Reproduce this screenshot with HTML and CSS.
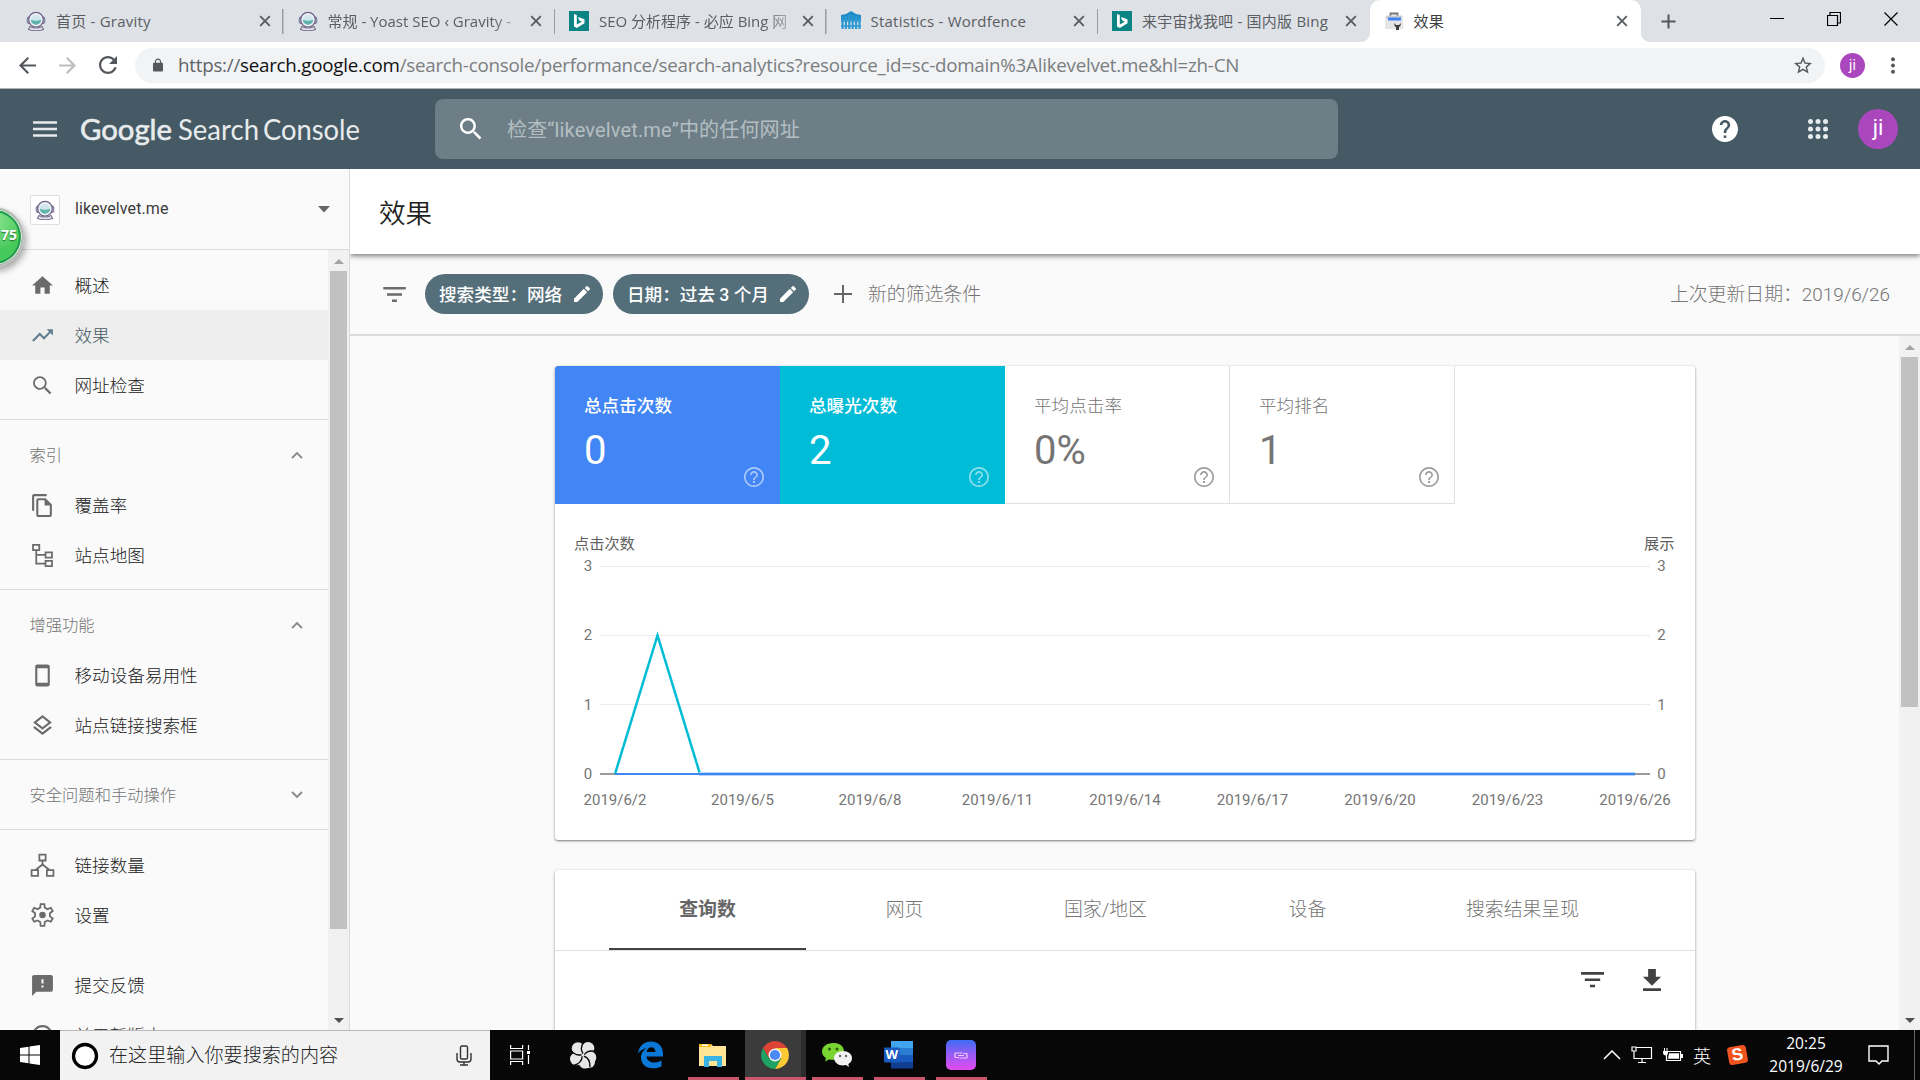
FILE: index.html
```html
<!DOCTYPE html>
<html lang="zh-CN">
<head>
<meta charset="utf-8">
<title>效果</title>
<link rel="stylesheet" href="styles.css">
</head>
<body>
<svg class="defs" width="0" height="0">
  <symbol id="astro" viewBox="0 0 20 20">
    <path d="M4 15.500q6 3 12 0l1.500 3q-7.500 2.400-15 0z" fill="#e4e0ec" stroke="#77708e" stroke-width="1.100"/>
    <rect x="1.200" y="6" width="3" height="6.500" rx="1.500" fill="#aaa4c0" stroke="#6b6486" stroke-width=".8"/>
    <rect x="15.800" y="6" width="3" height="6.500" rx="1.500" fill="#aaa4c0" stroke="#6b6486" stroke-width=".8"/>
    <circle cx="10" cy="8.700" r="7.300" fill="#f0eef6" stroke="#6b6486" stroke-width="1.200"/>
    <ellipse cx="10" cy="9" rx="5.300" ry="4.900" fill="#cfe9ea"/>
    <path d="M4.900 8.700q5 2 10.200 0a5.100 5 0 0 1-10.200 0z" fill="#5fb3ad"/>
  </symbol>
  <symbol id="bing" viewBox="0 0 20 20"><path d="M0 0h20v20H0z" fill="#0c8484"/><path d="M5 3l2.800 1v9.600l5-2.900-2.500-1.200-1.400-3.600 6.600 2.400v3.900L7.800 17 5 15.400z" fill="#fff"/></symbol>
  <symbol id="fence" viewBox="0 0 20 20"><path d="M0 9V4l5-1 5-3 5 3 5 1v5z" fill="#1c8cc8"/><path d="M1.500 6v12M4.900 5v13M8.300 4v14M11.700 4v14M15.100 5v13M18.500 6v12" stroke="#2d99d2" stroke-width="2.200"/><path d="M0 10h20M0 15h20" stroke="#2d99d2" stroke-width="1.300"/></symbol>
  <symbol id="gsc" viewBox="0 0 18 20"><path d="M5.500 5V2.500h7V5" fill="none" stroke="#777" stroke-width="1.800"/><path d="M1.500 4.500h15l1.500 3H0z" fill="#c8ccd0"/><path d="M0 7.500h18V18H0z" fill="#e3e5e7"/><path d="M3 6.500h13v3H3z" fill="#3f83f0"/><path d="M9 12q0 3 2 4v3h3v-3q2-1 2-4l-2 2h-3z" fill="#3c3c3c"/></symbol>
  <symbol id="x" viewBox="0 0 12 12"><path d="M1.200 1.200l9.600 9.600m0-9.600l-9.600 9.600" stroke="#5a5e63" stroke-width="1.900"/></symbol>
  <symbol id="helpo" viewBox="2 2 20 20"><path d="M11 18h2v-2h-2v2zm1-16C6.480 2 2 6.480 2 12s4.480 10 10 10 10-4.480 10-10S17.520 2 12 2zm0 18.300c-4.600 0-8.300-3.700-8.300-8.300S7.400 3.700 12 3.700s8.300 3.700 8.300 8.300-3.700 8.300-8.300 8.300zM12 6c-2.210 0-4 1.790-4 4h1.700c0-1.250 1-2.300 2.300-2.300s2.300 1.050 2.300 2.300c0 2-3.150 1.900-3.150 5h1.700c0-2.400 3.150-2.600 3.150-5 0-2.210-1.790-4-4-4z"/></symbol>
  <symbol id="pencil" viewBox="3 3 18 18"><path d="M3 17.250V21h3.750L17.810 9.940l-3.750-3.750L3 17.250zM20.710 7.040c.39-.39.39-1.020 0-1.410l-2.340-2.340c-.39-.39-1.020-.39-1.410 0l-1.830 1.830 3.750 3.750 1.830-1.830z"/></symbol>
  <symbol id="filter" viewBox="3 6 18 12"><path d="M10 18h4v-2h-4v2zM3 6v2h18V6H3zm3 7h12v-2H6v2z"/></symbol>
  <symbol id="up" viewBox="0 0 12 8"><path d="M1 7l5-5 5 5" fill="none" stroke="#8a8a8a" stroke-width="1.800"/></symbol>
  <symbol id="loupe" viewBox="3 3 18 18"><path d="M15.500 14h-.79l-.28-.27C15.410 12.590 16 11.110 16 9.500 16 5.910 13.090 3 9.500 3S3 5.910 3 9.500 5.910 16 9.500 16c1.610 0 3.090-.59 4.230-1.570l.27.28v.79l5 4.990L20.490 19l-4.990-5zm-6 0C7.010 14 5 11.990 5 9.500S7.010 5 9.500 5 14 7.010 14 9.500 11.990 14 9.500 14z"/></symbol>
</svg>

<div class="tabstrip">
  <div class="tab"><svg class="fav"><use href="#astro"/></svg><span class="tab-title">首页 - Gravity</span><svg class="tab-x"><use href="#x"/></svg></div>
  <div class="tab"><svg class="fav"><use href="#astro"/></svg><span class="tab-title fade">常规 - Yoast SEO ‹ Gravity -</span><svg class="tab-x"><use href="#x"/></svg></div>
  <div class="tab"><svg class="fav"><use href="#bing"/></svg><span class="tab-title fade">SEO 分析程序 - 必应 Bing 网</span><svg class="tab-x"><use href="#x"/></svg></div>
  <div class="tab"><svg class="fav"><use href="#fence"/></svg><span class="tab-title">Statistics - Wordfence</span><svg class="tab-x"><use href="#x"/></svg></div>
  <div class="tab last"><svg class="fav"><use href="#bing"/></svg><span class="tab-title">来宇宙找我吧 - 国内版 Bing</span><svg class="tab-x"><use href="#x"/></svg></div>
  <div class="tab active"><svg class="fav"><use href="#gsc"/></svg><span class="tab-title">效果</span><svg class="tab-x"><use href="#x"/></svg></div>
  <svg class="newtab" viewBox="0 0 16 16"><path d="M8 0.500v15M.5 8h15" stroke="#54585c" stroke-width="2.200"/></svg>
  <div class="win">
    <svg width="14" height="14"><path d="M0 6.500h14" stroke="#000"/></svg>
    <svg width="14" height="14"><path d="M.5 3.500h10v10H.5zM3 3V.5h10.500V11H11" fill="none" stroke="#000" stroke-width="1.200"/></svg>
    <svg width="14" height="14"><path d="M.5.500l13 13m0-13l-13 13" stroke="#000" stroke-width="1.200"/></svg>
  </div>
</div>

<div class="toolbar">
  <svg class="tb-back" viewBox="4 4 16 16"><path fill="#54585c" d="M20 11H7.830l5.590-5.590L12 4l-8 8 8 8 1.410-1.410L7.830 13H20v-2z"/></svg>
  <svg class="tb-fwd" viewBox="4 4 16 16"><path fill="#bcbec0" d="M12 4l-1.410 1.410L16.170 11H4v2h12.170l-5.580 5.590L12 20l8-8z"/></svg>
  <svg class="tb-reload" viewBox="4 4 16 16"><path fill="#54585c" d="M17.650 6.350C16.200 4.900 14.210 4 12 4c-4.420 0-7.990 3.580-7.990 8s3.570 8 7.990 8c3.730 0 6.840-2.550 7.730-6h-2.080c-.82 2.330-3.040 4-5.650 4-3.310 0-6-2.690-6-6s2.690-6 6-6c1.660 0 3.140.69 4.220 1.780L13 11h7V4l-2.350 2.350z"/></svg>
  <div class="omnibox">
    <svg class="lock" viewBox="4 1 16 21"><path fill="#54585c" d="M18 8h-1V6c0-2.760-2.240-5-5-5S7 3.240 7 6v2H6c-1.100 0-2 .9-2 2v10c0 1.100.9 2 2 2h12c1.100 0 2-.9 2-2V10c0-1.100-.9-2-2-2zm-2.900 0H8.900V6c0-1.710 1.390-3.100 3.100-3.100s3.100 1.390 3.100 3.100v2z"/></svg>
    <span class="url">https://<b>search.google.com</b><i>/search-console/performance/search-analytics?resource_id=sc-domain%3Alikevelvet.me&amp;hl=zh-CN</i></span>
    <svg class="star" viewBox="2 2 20 19"><path fill="#54585c" d="M22 9.240l-7.190-.62L12 2 9.190 8.630 2 9.240l5.460 4.730L5.820 21 12 17.270 18.180 21l-1.630-7.030L22 9.240zM12 15.400l-3.760 2.270 1-4.280-3.320-2.880 4.380-.38L12 6.100l1.710 4.040 4.380.38-3.320 2.880 1 4.280L12 15.400z"/></svg>
  </div>
  <span class="avatar small">ji</span>
  <svg class="dots" width="4" height="17"><circle cx="2" cy="2.200" r="2"/><circle cx="2" cy="8.500" r="2"/><circle cx="2" cy="14.800" r="2"/></svg>
</div>

<header class="appbar">
  <svg class="burger" width="24" height="16"><path d="M0 1.500h24M0 8h24M0 14.500h24" stroke="#e8ebec" stroke-width="2.400"/></svg>
  <svg class="logo" width="284" height="44">
    <text class="logo-bold" x="0" y="32.500" textLength="92" lengthAdjust="spacingAndGlyphs">Google</text>
    <text x="98" y="32.500" textLength="81" lengthAdjust="spacingAndGlyphs">Search</text>
    <text x="183" y="32.500" textLength="97" lengthAdjust="spacingAndGlyphs">Console</text>
  </svg>
  <div class="inspect"><svg class="inspect-icon"><use href="#loupe"/></svg><span>检查“likevelvet.me”中的任何网址</span></div>
  <svg class="help" viewBox="2 2 20 20"><path fill="#fff" d="M12 2C6.480 2 2 6.480 2 12s4.480 10 10 10 10-4.480 10-10S17.520 2 12 2zm1 17h-2v-2h2v2zm2.070-7.750l-.9.920C13.450 12.900 13 13.500 13 15h-2v-.5c0-1.100.45-2.100 1.170-2.830l1.240-1.260c.37-.36.590-.86.590-1.410 0-1.100-.9-2-2-2s-2 .9-2 2H8c0-2.210 1.790-4 4-4s4 1.790 4 4c0 .88-.36 1.680-.93 2.250z"/></svg>
  <svg class="apps" viewBox="0 0 20 20" fill="#e8ebec"><circle cx="2.500" cy="2.500" r="2.500"/><circle cx="10" cy="2.500" r="2.500"/><circle cx="17.500" cy="2.500" r="2.500"/><circle cx="2.500" cy="10" r="2.500"/><circle cx="10" cy="10" r="2.500"/><circle cx="17.500" cy="10" r="2.500"/><circle cx="2.500" cy="17.500" r="2.500"/><circle cx="10" cy="17.500" r="2.500"/><circle cx="17.500" cy="17.500" r="2.500"/></svg>
  <span class="avatar">ji</span>
</header>

<div class="body">
  <aside class="side">
    <div class="property"><span class="prop-icon"><svg><use href="#astro"/></svg></span><span class="prop-name">likevelvet.me</span><svg width="12" height="7"><path d="M0 0h12L6 6.500z" fill="#666"/></svg></div>
    <div class="side-scroll">
      <nav class="nav">
        <div class="group">
          <div class="item"><svg viewBox="0 0 24 24"><path d="M10 20v-6h4v6h5v-8h3L12 3 2 12h3v8z"/></svg><span>概述</span></div>
          <div class="item on"><svg viewBox="0 0 24 24"><path d="M16 6l2.290 2.290-4.880 4.880-4-4L2 16.590 3.410 18l6-6 4 4 6.300-6.290L22 12V6z"/></svg><span>效果</span></div>
          <div class="item"><svg viewBox="0 0 24 24"><path d="M15.500 14h-.79l-.28-.27C15.410 12.590 16 11.110 16 9.500 16 5.910 13.090 3 9.500 3S3 5.910 3 9.500 5.910 16 9.500 16c1.610 0 3.090-.59 4.230-1.570l.27.280v.79l5 4.990L20.490 19l-4.990-5zm-6 0.300C7.010 14.300 4.700 11.990 4.700 9.500S7.010 4.700 9.500 4.700 14.300 7.010 14.300 9.500 11.990 14.300 9.500 14.300z"/></svg><span>网址检查</span></div>
        </div>
        <div class="group">
          <div class="label"><span>索引</span><svg><use href="#up"/></svg></div>
          <div class="item"><svg viewBox="0 0 24 24"><path d="M16 1H4c-1.100 0-2 .9-2 2v14h2V3h12V1zm-1 4l6 6v10c0 1.100-.9 2-2 2H7.990C6.890 23 6 22.100 6 21V7c0-1.100.9-2 1.990-2H15zM8 7v14h11v-9h-5V7H8z"/></svg><span>覆盖率</span></div>
          <div class="item"><svg viewBox="0 0 24 24" class="line"><path d="M2.900 1.900h6v5h-6zM14.900 9h6.200v5h-6.200zM14.900 17.200h6.200v5h-6.200zM6 7v12.700h9M6 11.500h9"/></svg><span>站点地图</span></div>
        </div>
        <div class="group">
          <div class="label"><span>增强功能</span><svg><use href="#up"/></svg></div>
          <div class="item"><svg viewBox="0 0 24 24"><path d="M17 1.500H7c-1.100 0-2 .9-2 2v17c0 1.100.9 2 2 2h10c1.100 0 2-.9 2-2v-17c0-1.100-.9-2-2-2zM17 19H7V5h10v14z"/></svg><span>移动设备易用性</span></div>
          <div class="item"><svg viewBox="0 0 24 24"><path d="M11.990 18.540l-7.370-5.730L3 14.070l9 7 9-7-1.630-1.270-7.380 5.740zM12 16l7.360-5.730L21 9l-9-7-9 7 1.630 1.270L12 16zm0-11.470L17.740 9 12 13.470 6.260 9 12 4.530z"/></svg><span>站点链接搜索框</span></div>
        </div>
        <div class="group">
          <div class="label"><span>安全问题和手动操作</span><svg class="down"><use href="#up"/></svg></div>
        </div>
        <div class="group plain">
          <div class="item"><svg viewBox="0 0 24 24" class="line"><path d="M9 1.500h6v5.700H9zM1.500 16.500h6.300V22H1.500zM16.200 16.500h6.300V22h-6.300zM12 7v5M5 16.500l7-5.500 7 5.500"/></svg><span>链接数量</span></div>
          <div class="item"><svg viewBox="0 0 24 24" class="line"><path d="M9.800 4.400L10.200 1h3.600l.4 3.400 2.600 1.500 3.200-1.300 1.800 3.100-2.700 2.100v3l2.700 2.100-1.800 3.100-3.200-1.300-2.600 1.500-.4 3.800h-3.600l-.4-3.800-2.600-1.500L4 18l-1.800-3.100 2.700-2.100v-3L2.200 7.700 4 4.600l3.200 1.300z"/><circle cx="12" cy="11.500" r="2.300" fill="#6b6b6b"/></svg><span>设置</span></div>
        </div>
        <div class="group plain">
          <div class="item"><svg viewBox="0 0 24 24"><path d="M20 2H4c-1.100 0-1.990.9-1.990 2L2 22l4-4h14c1.100 0 2-.9 2-2V4c0-1.100-.9-2-2-2zm-7 12h-2v-2h2v2zm0-4h-2V6h2v4z"/></svg><span>提交反馈</span></div>
          <div class="item"><svg viewBox="0 0 24 24"><path d="M11 7h2v2h-2zm0 4h2v6h-2zm1-9C6.480 2 2 6.480 2 12s4.480 10 10 10 10-4.480 10-10S17.520 2 12 2zm0 18c-4.410 0-8-3.590-8-8s3.590-8 8-8 8 3.590 8 8-3.590 8-8 8z"/></svg><span>关于新版本</span></div>
        </div>
      </nav>
      <div class="sbar side-bar"><i class="arr"></i><b></b><i class="arr dn"></i></div>
    </div>
  </aside>

  <main class="main">
    <h1 class="title">效果</h1>
    <div class="filters">
      <svg class="f-icon"><use href="#filter"/></svg>
      <span class="chip c1"><span>搜索类型：网络</span><svg><use href="#pencil"/></svg></span>
      <span class="chip c2"><span>日期：过去 3 个月</span><svg><use href="#pencil"/></svg></span>
      <svg class="f-plus" width="18" height="18"><path d="M9 0v18M0 9h18" stroke="#666" stroke-width="2"/></svg>
      <span class="f-new">新的筛选条件</span>
      <span class="f-date">上次更新日期：2019/6/26</span>
    </div>
    <div class="content">
      <div class="cards">
        <section class="card perf">
          <div class="metrics">
            <div class="metric blue"><span>总点击次数</span><strong>0</strong><svg><use href="#helpo"/></svg></div>
            <div class="metric cyan"><span>总曝光次数</span><strong>2</strong><svg><use href="#helpo"/></svg></div>
            <div class="metric"><span>平均点击率</span><strong>0%</strong><svg><use href="#helpo"/></svg></div>
            <div class="metric"><span>平均排名</span><strong>1</strong><svg><use href="#helpo"/></svg></div>
          </div>
          <svg class="chart" width="1140" height="336">
            <g class="grid"><path d="M45 62.500h1050M45 131.500h1050M45 200.500h1050"/></g>
            <path d="M45 270h1050" stroke="#9a9a9a" stroke-width="2"/>
            <path d="M60 270L102.500 131.500 145 270H1080" fill="none" stroke="#00bcd4" stroke-width="2.500"/>
            <path d="M144 270H1080" stroke="#b5d6fa" stroke-width="4"/>
            <path d="M60 270H1080" stroke="#4285f4" stroke-width="2"/>
            <g class="axis-title"><text x="19" y="45">点击次数</text><text x="1089" y="45">展示</text></g>
            <g class="ticks">
              <text x="33" y="67">3</text><text x="33" y="136">2</text><text x="33" y="206">1</text><text x="33" y="275">0</text>
              <text x="1106.500" y="67">3</text><text x="1106.500" y="136">2</text><text x="1106.500" y="206">1</text><text x="1106.500" y="275">0</text>
              <text x="60" y="301">2019/6/2</text><text x="187.500" y="301">2019/6/5</text><text x="315" y="301">2019/6/8</text><text x="442.500" y="301">2019/6/11</text><text x="570" y="301">2019/6/14</text><text x="697.500" y="301">2019/6/17</text><text x="825" y="301">2019/6/20</text><text x="952.500" y="301">2019/6/23</text><text x="1080" y="301">2019/6/26</text>
            </g>
          </svg>
        </section>
        <section class="card table">
          <div class="dims">
            <span class="dim sel">查询数</span><span class="dim">网页</span><span class="dim d3">国家/地区</span><span class="dim d4">设备</span><span class="dim d5">搜索结果呈现</span>
          </div>
          <div class="tools">
            <svg width="23" height="15.500"><use href="#filter"/></svg>
            <svg width="18" height="22" viewBox="5 3 14 17"><path d="M19 9h-4V3H9v6H5l7 7 7-7zM5 18v2h14v-2H5z"/></svg>
          </div>
        </section>
      </div>
      <div class="sbar main-bar"><i class="arr"></i><b></b><i class="arr dn"></i></div>
    </div>
  </main>
</div>

<div class="orb">75</div>

<footer class="taskbar">
  <div class="start"><svg width="20" height="20" fill="#fff"><path d="M0 3l8.500-1.200v7.700H0zM9.500 1.600L20 0v9.500H9.500zM0 10.500h8.500v7.700L0 17zM9.500 10.500H20V20L9.500 18.400z"/></svg></div>
  <div class="tsearch">
    <svg width="28" height="28"><circle cx="14" cy="14" r="11.500" fill="#fff" stroke="#000" stroke-width="3.300"/></svg>
    <span>在这里输入你要搜索的内容</span>
    <svg class="mic" width="16" height="21"><rect x="4.500" y="1" width="7" height="13" rx="1.500" fill="none" stroke="#333" stroke-width="1.400"/><path d="M1 8v6q0 3 3 3h8q3 0 3-3V8M8 17v3M4 20h8" fill="none" stroke="#333" stroke-width="1.400"/></svg>
  </div>
  <div class="task t1"><svg width="20" height="20" fill="none" stroke="#fff" stroke-width="1.200"><path d="M.6 0v3.500h12V0M.6 20v-3.500h12V20M.6 6h12v8H.6zM18.500 0v5M18.500 10v9"/><path d="M17 6h3v3h-3z" fill="#fff" stroke="none"/></svg></div>
  <div class="task t2"><svg width="28" height="28" viewBox="-14 -14 28 28">
    <g fill="#e6e6e6"><circle r="7"/><circle cx="-5" cy="-6.500" r="6.300"/><circle cx="5" cy="-6.800" r="6.300"/><circle cx="7" cy="2.500" r="6.300"/><circle cx="2" cy="7.200" r="6.300"/><circle cx="-6.700" cy="4" r="6.300"/><circle cx="6" cy="7" r="6"/></g>
    <g fill="none" stroke="#070707" stroke-width="1.300"><path id="vane" d="M0-1.500Q-4-7 1.500-14"/><use href="#vane" transform="rotate(72)"/><use href="#vane" transform="rotate(144)"/><use href="#vane" transform="rotate(216)"/><use href="#vane" transform="rotate(288)"/></g>
  </svg></div>
  <div class="task t3"><svg width="26" height="28"><path d="M0 12.500C1 4.500 6.500.500 13 .5c7.500 0 12 5.500 12 12v3H8.500c.3 4 4 6 8 6 2.500 0 5-.7 7-1.900v5.700c-2.500 1.400-5.300 2-8.500 2C7.500 27.300 3 22.500 3 16.500c0-4.200 2.200-7.500 6-9.300C5 7.500 2 9.500 0 12.500zM8.700 11h8.700c0-2.700-1.200-4.800-4.100-4.800-2.500 0-4.200 2-4.600 4.800z" fill="#0b78d8"/></svg></div>
  <div class="task run t4"><svg width="28" height="24"><path d="M0 2q0-1 1-1h11l2 2h13v20H0z" fill="#ffe594"/><path d="M0 1h12v3H0z" fill="#f9b916"/><path d="M3 1.500h6v1.500H3z" fill="#fff"/><path d="M5 24V13h18v11h-5v-6h-8v6z" fill="#39b2e5"/></svg></div>
  <div class="task run cur t5"><svg width="28" height="28" viewBox="-14 -14 28 28"><path d="M-12.100-7A14 14 0 0 1 12.100-7L0-7-6 3.500z" fill="#dc4437"/><path d="M12.100-7A14 14 0 0 1 0 14L6 3.500 0-7z" fill="#fcc934"/><path d="M0 14A14 14 0 0 1-12.100-7L-6 3.500 6 3.500z" fill="#1ea362"/><circle r="6.500" fill="#f4f4f4"/><circle r="5.100" fill="#4c8bf5"/></svg></div>
  <div class="task run t6"><svg width="30" height="26"><path d="M11 1C5 1 0 4.500 0 9.500c0 3 1.500 5 4 6.500l-1 3.500 4-2c8 1.500 15-2 15-8S17 1 11 1z" fill="#79d331"/><circle cx="7.500" cy="7" r="1.500" fill="#285b0b"/><circle cx="15" cy="7" r="1.500" fill="#285b0b"/><path d="M21 9c-5 0-9 3-9 7s4 7.500 9 7.500l3-.4 3 2-.7-3C29 20.600 30 18.500 30 16c0-4-4-7-9-7z" fill="#f1f1f1"/><circle cx="18" cy="14" r="1.200" fill="#666"/><circle cx="24" cy="14" r="1.200" fill="#666"/></svg></div>
  <div class="task run t7"><svg width="30" height="28"><path d="M7 0h22v7H7z" fill="#41a5ee"/><path d="M7 7h22v7H7z" fill="#2b7cd3"/><path d="M7 14h22v7H7z" fill="#185abd"/><path d="M7 21h22v6.500H7z" fill="#103f91"/><rect y="6.500" width="15.500" height="15" rx="1" fill="#185abd"/><text x="7.800" y="18" text-anchor="middle" class="word-w">W</text></svg></div>
  <div class="task run t8"><span class="app"><svg width="14" height="7" fill="none" stroke="#f1ccff" stroke-width="1.200"><path d="M8.500 1H2Q1 1 1 2v2.500q0 1 1 1h3M5.500 6H12q1 0 1-1V2.500q0-1-1-1H9.500M4 3.500h6"/></svg></span></div>
  <div class="tray">
    <svg width="18" height="10"><path d="M1 9l8-8 8 8" fill="none" stroke="#fff" stroke-width="1.500"/></svg>
    <svg width="22" height="18" class="y1" fill="none" stroke="#fff" stroke-width="1.200"><path d="M5 1.500h15.500v11H3V7M11 12.500v3.500M7 16.500h8M1 1h4v4H1zM3 5v4"/></svg>
    <svg width="20" height="15" class="y2"><path d="M3.500 3.500h14v9h-14z" fill="none" stroke="#fff" stroke-width="1.200"/><path d="M6 5.200h10v5.600H5zM18 6h2v4h-2zM0 3h5v2q0 2-2.500 2.500Q0 7 0 5zM1 0h1v3H1zM3.500 0h1v3h-1z" fill="#fff"/></svg>
    <span class="ime">英</span>
    <span class="sogou">S</span>
    <span class="clock">20:25<br>2019/6/29</span>
    <svg width="21" height="21" class="note"><path d="M1 1h19v15h-6l-3 3-3-3H1z" fill="none" stroke="#fff" stroke-width="1.400"/></svg>
    <i class="peek"></i>
  </div>
</footer>
</body>
</html>
```
FILE: styles.css
```css
* { box-sizing: border-box; }
body {
  margin: 0;
  width: 1920px;
  height: 1080px;
  overflow: hidden;
  display: flex;
  flex-direction: column;
  position: relative;
  background: #fafafa;
  font-family: Roboto, "Noto Sans CJK SC", sans-serif;
  color: #212121;
  white-space: nowrap;
}
svg { display: block; flex: none; }
.defs { position: absolute; }

/* Browser tabs */
.tabstrip {
  height: 42px;
  flex: none;
  background: #dee1e6;
  display: flex;
  align-items: center;
  padding-left: 12px;
  font-family: "Open Sans", "Noto Sans CJK SC", sans-serif;
}
.tab {
  width: 271.5px;
  height: 42px;
  padding: 0 13px 0 14px;
  display: flex;
  align-items: center;
  flex: none;
  font-size: 15px;
  color: #5a5e63;
  background: linear-gradient(#9a9da2, #9a9da2) no-repeat right 9px / 1.500px 25px;
}
.tab.last { background: none; }
.fav { width: 20px; height: 20px; margin-right: 10px; }
.tab-title {
  flex: 1;
  letter-spacing: .22px;
  margin-right: 8px;
  padding-bottom: 1px;
}
.tab-title.fade {
  letter-spacing: 0;
  -webkit-mask-image: linear-gradient(90deg, #000 84%, rgba(0, 0, 0, .25));
  mask-image: linear-gradient(90deg, #000 84%, rgba(0, 0, 0, .25));
}
.tab-x { width: 12px; height: 12px; }
.tab.active {
  background: #fff;
  border-radius: 10px 10px 0 0;
  position: relative;
  color: #3c4043;
}
.tab.active::before, .tab.active::after {
  content: "";
  position: absolute;
  bottom: 0;
  width: 10px;
  height: 10px;
}
.tab.active::before { left: -10px; background: radial-gradient(circle at 0 0, transparent 10px, #fff 10.500px); }
.tab.active::after { right: -10px; background: radial-gradient(circle at 10px 0, transparent 10px, #fff 10.500px); }
.newtab { width: 15px; height: 15px; margin-left: 20px; }
.win { margin-left: auto; display: flex; gap: 43px; padding: 0 22px 4px 0; }

/* Address bar */
.toolbar {
  height: 47px;
  flex: none;
  background: #fff;
  border-bottom: 1px solid #b3b0b4;
  display: flex;
  align-items: center;
}
.tb-back, .tb-fwd { width: 17px; height: 17px; margin-left: 19px; }
.tb-fwd { margin-left: 23px; }
.tb-reload { width: 18px; height: 18px; margin-left: 23px; }
.omnibox {
  margin-left: 18px;
  width: 1690px;
  height: 35px;
  border-radius: 18px;
  background: #f1f3f4;
  display: flex;
  align-items: center;
}
.lock { width: 10px; height: 14px; margin-left: 18px; }
.url { margin-left: 15px; padding-bottom: 2px; font: 18.750px "Open Sans", sans-serif; letter-spacing: -.24px; color: #5f6368; }
.url b { font-weight: 400; color: #111; }
.url i { font-style: normal; color: #7a7e82; }
.star { width: 18px; height: 18px; margin-left: auto; margin-right: 13px; }
.avatar {
  width: 40px;
  height: 40px;
  border-radius: 50%;
  background: #ab47bc;
  color: #fff;
  font-size: 22px;
  line-height: 38px;
  text-align: center;
  flex: none;
}
.avatar.small { width: 25px; height: 25px; font-size: 14px; line-height: 24px; margin-left: 15px; }
.dots { margin-left: 26px; fill: #54585c; }

/* Search Console header */
.appbar {
  height: 80px;
  flex: none;
  background: #455a64;
  display: flex;
  align-items: center;
}
.burger { margin-left: 33px; }
.logo { margin-left: 23px; font: 28px Lato, sans-serif; fill: #e8ebec; }
.logo-bold { stroke: #e8ebec; stroke-width: .6px; }
.inspect {
  margin-left: 71px;
  width: 903px;
  height: 60px;
  border-radius: 8px;
  background: #6d7e86;
  display: flex;
  align-items: center;
  color: #b4bec2;
  font-size: 20px;
}
.inspect-icon { width: 22px; height: 22px; margin: 0 25px 0 25px; fill: #fff; }
.inspect span { letter-spacing: .15px; padding-bottom: 1px; }
.help { width: 26px; height: 26px; margin-left: 374px; }
.apps { width: 20px; height: 20px; margin-left: 70px; }
.appbar .avatar { margin-left: 30px; }

/* Sidebar */
.body { height: 861px; display: flex; flex: none; }
.side { width: 350px; border-right: 1px solid #dadada; display: flex; flex-direction: column; }
.property { height: 81px; flex: none; border-bottom: 1px solid #dadada; display: flex; align-items: center; padding: 0 19px 0 30px; font-size: 16px; color: #3c3c3c; }
.prop-icon { width: 30px; height: 30px; border: 1px solid #ddd; border-radius: 2px; background: #fff; display: grid; place-items: center; margin: 2px 15px 0 0; }
.prop-icon svg { width: 20px; height: 20px; }
.prop-name { flex: 1; letter-spacing: .1px; padding-bottom: 2px; }
.side-scroll { flex: 1; min-height: 0; display: flex; }
.nav { width: 328px; overflow: hidden; }
.group { padding: 10px 0 9px; border-bottom: 1px solid #dadada; }
.group.plain { border: 0; padding-bottom: 10px; }
.item { height: 50px; display: flex; align-items: center; padding-left: 30px; font-size: 17.600px; font-weight: 300; }
.item span, .label span { padding-bottom: 2px; }
.item svg { width: 25px; height: 25px; margin-right: 19.500px; fill: #6b6b6b; }
.item svg.line { fill: none; stroke: #6b6b6b; stroke-width: 1.700; }
.item.on { background: #eee; color: #455a64; }
.item.on svg { fill: #607d8b; }
.label { height: 50px; display: flex; align-items: center; justify-content: space-between; padding: 0 25px 0 29.500px; font-size: 16.300px; font-weight: 300; color: #757575; }
.label svg { width: 12px; height: 8px; }
.label .down { transform: scaleY(-1); }

/* Scrollbars */
.sbar { width: 21px; background: #f1f1f1; display: flex; flex-direction: column; align-items: center; }
.sbar b { width: 17px; background: #c1c1c1; }
.arr { width: 0; height: 0; border: 5px solid transparent; border-top: 0; border-bottom: 5px solid #a3a3a3; margin: 9px 0 7px; }
.arr.dn { border-bottom: 0; border-top: 5px solid #505050; margin: auto 0 7px; }
.side-bar b { height: 658px; }
.main-bar b { height: 350px; }

/* Main column */
.main { flex: 1; display: flex; flex-direction: column; }
.title {
  margin: 0;
  height: 85px;
  flex: none;
  padding: 0 29px 0;
  background: #fff;
  box-shadow: 0 2px 5px rgba(0, 0, 0, .5);
  clip-path: inset(0 0 -10px 0);
  position: relative;
  font-size: 26.600px;
  font-weight: 350;
  line-height: 90px;
}
.filters {
  height: 82px;
  flex: none;
  border-bottom: 2px solid #dcdcdc;
  display: flex;
  align-items: center;
  padding: 0 30px 0 33px;
  font-size: 18.850px;
  font-weight: 300;
  color: #757575;
}
.f-icon { width: 23px; height: 15px; fill: #6b6b6b; }
.chip {
  height: 40px;
  border-radius: 20px;
  background: #546e7a;
  color: #fff;
  font-size: 17.600px;
  font-weight: 500;
  display: flex;
  align-items: center;
  justify-content: space-between;
  padding: 0 13px 0 14px;
}
.chip span { padding-bottom: 1px; }
.chip svg { width: 16px; height: 16px; fill: #fff; }
.c1 { width: 178px; margin-left: 19px; }
.c2 { width: 196px; margin-left: 10px; }
.f-plus { margin-left: 25px; }
.f-new { margin-left: 16px; padding-bottom: 3px; }
.f-date { margin-left: auto; padding-bottom: 4px; }
.content { flex: 1; min-height: 0; display: flex; }
.cards { flex: 1; overflow: hidden; padding: 30px 204px 0 205px; }
.card { background: #fff; border-radius: 3px; box-shadow: 0 1px 3px rgba(0, 0, 0, .4), 0 1px 1px rgba(0, 0, 0, .15); }
.perf { height: 474px; margin-bottom: 30px; overflow: hidden; }
.metrics { display: flex; height: 138px; }
.metric {
  width: 225px;
  padding: 26px 15px 0 29px;
  display: flex;
  flex-direction: column;
  border: solid #e0e0e0;
  border-width: 0 1px 1px 0;
  color: #757575;
  font-size: 17.600px;
  font-weight: 300;
  line-height: 28px;
}
.metric strong { font-size: 40px; font-weight: 400; line-height: 62px; }
.metric svg { width: 20px; height: 20px; align-self: flex-end; fill: currentColor; opacity: .7; margin: -15px 0 0; }
.blue, .cyan { color: #fff; border: 0; font-weight: 500; padding-right: 16px; }
.blue svg, .cyan svg { opacity: .55; }
.blue { background: #4285f4; }
.cyan { background: #00bcd7; }
.grid { stroke: #ebebeb; }
.axis-title { font-size: 15.200px; fill: #606060; }
.ticks { font-size: 15px; fill: #757575; text-anchor: middle; }
.table { height: 300px; }
.dims { height: 81px; border-bottom: 1px solid #e0e0e0; display: flex; padding-left: 54px; }
.dim { width: 197px; text-align: center; font-size: 18.850px; font-weight: 300; line-height: 81px; color: #757575; }
.sel { border-bottom: 2px solid #424242; font-weight: 700; color: #666; height: 80px; }
.d3 { width: 205px; }
.d4 { width: 199px; }
.d5 { width: 231px; }
.tools { display: flex; align-items: center; justify-content: flex-end; gap: 39px; padding: 18px 34px 0 0; fill: #424242; }

/* Floating speed-up ball */
.orb {
  position: absolute;
  left: -36px;
  top: 207px;
  width: 60px;
  height: 60px;
  border-radius: 50%;
  border: 2px solid #b9bcb9;
  background: radial-gradient(circle at 50% 20%, #8be38f, #45c95a 60%);
  box-shadow: inset 0 0 0 1px #eee, inset 0 0 0 3px #219a4c, 2px 4px 7px rgba(0, 0, 0, .35);
  color: #fff;
  font: bold 14px/51px "Open Sans", sans-serif;
  text-align: right;
  padding-right: 5px;
  text-shadow: 0 1px 1px #286b31;
}

/* Windows taskbar */
.taskbar { height: 50px; flex: none; background: #070707; display: flex; }
.start { width: 60px; display: grid; place-items: center; }
.tsearch { width: 430px; background: #f2f2f2; border-top: 1px solid #b8b8b8; display: flex; align-items: center; padding-left: 11px; font-size: 19.100px; font-weight: 300; color: #222; }
.tsearch span { margin-left: 10px; padding-bottom: 3px; }
.mic { margin-left: auto; margin-right: 18px; }
.task { height: 50px; display: grid; place-items: center; flex: none; width: 51px; }
.t1 { width: 60px; }
.t2 { width: 66px; }
.t3 { width: 70px; }
.run { border-bottom: 3px solid #c9566c; padding-top: 3px; }
.t4 { margin-left: 2px; margin-right: 6px; padding-right: 2px; }
.t5 { width: 61px; background: #3b3b3b; box-shadow: inset -5px 0 #2c2c2c; margin-right: 6px; padding-right: 2px; }
.t6, .t7 { margin-right: 11px; padding-right: 2px; }
.t8 { padding-right: 2px; }
.app { width: 30px; height: 30px; border-radius: 5px; background: linear-gradient(#3f6df6, #9b5af5 50%, #e34bf0); display: grid; place-items: center; }
.word-w { font: bold 13px "Open Sans", sans-serif; fill: #fff; }
.tray { margin-left: auto; display: flex; align-items: center; color: #fff; }
.y1 { margin-left: 10px; }
.y2 { margin-left: 10px; }
.ime { font-size: 18px; font-weight: 300; margin-left: 10px; padding-bottom: 1px; }
.sogou { width: 19px; height: 18px; margin-left: 17px; background: #f0541e; border-radius: 3px; transform: rotate(-10deg); font: bold 17px/18px "Liberation Sans", sans-serif; text-align: center; }
.clock { width: 80px; margin-left: 19px; font: 15.500px/23px "Open Sans", sans-serif; text-align: center; }
.note { margin-left: 22px; }
.peek { width: 1px; height: 50px; background: #666; margin: 0 5px 0 25px; }
```
